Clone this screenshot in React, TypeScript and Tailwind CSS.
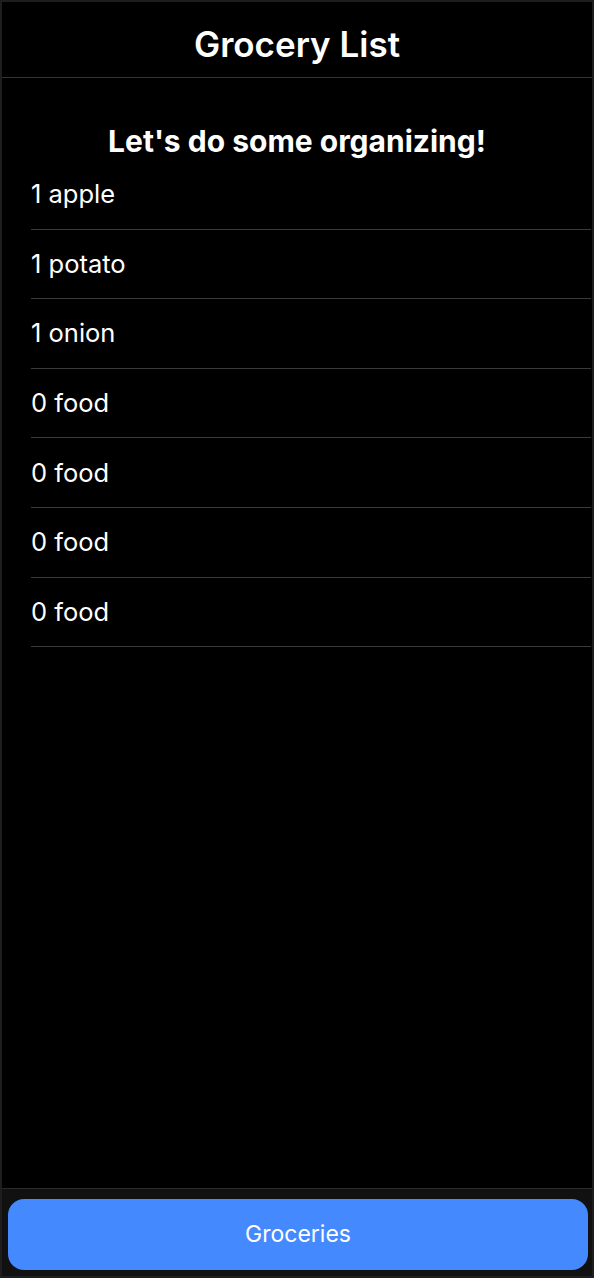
const items = ["1 apple", "1 potato", "1 onion", "0 food", "0 food", "0 food", "0 food"];

export default function App() {
  return (
    <div
      className="flex h-[1278px] w-[594px] flex-col border-2 border-[#1e1e1e] bg-black text-white"
      style={{ fontFamily: "Inter, Roboto, 'Liberation Sans', sans-serif" }}
    >
      <header className="flex h-[76px] items-center justify-center border-b border-[#333333] pt-[8px]">
        <h1 className="text-[35px] font-semibold leading-[40px]">Grocery List</h1>
      </header>

      <main className="flex-1">
        <h2 className="mt-[44px] text-center text-[30px] font-bold leading-[38px]">
          Let's do some organizing!
        </h2>
        <ul className="pl-[29px] pr-[1px]">
          {items.map((item, i) => (
            <li
              key={i}
              className="flex h-[69.6px] items-center border-b border-[#3a3a3a] text-[25.5px] font-normal leading-[32px]"
            >
              <span>{item}</span>
            </li>
          ))}
        </ul>
      </main>

      <footer className="border-t border-[#2c2c2c] bg-[#111111] pb-[6px] pl-[6px] pr-[4px] pt-[10px]">
        <button
          type="button"
          className="flex h-[71px] w-full items-center justify-center rounded-[16px] bg-[#4589ff] text-[23px] text-white"
        >
          Groceries
        </button>
      </footer>
    </div>
  );
}
